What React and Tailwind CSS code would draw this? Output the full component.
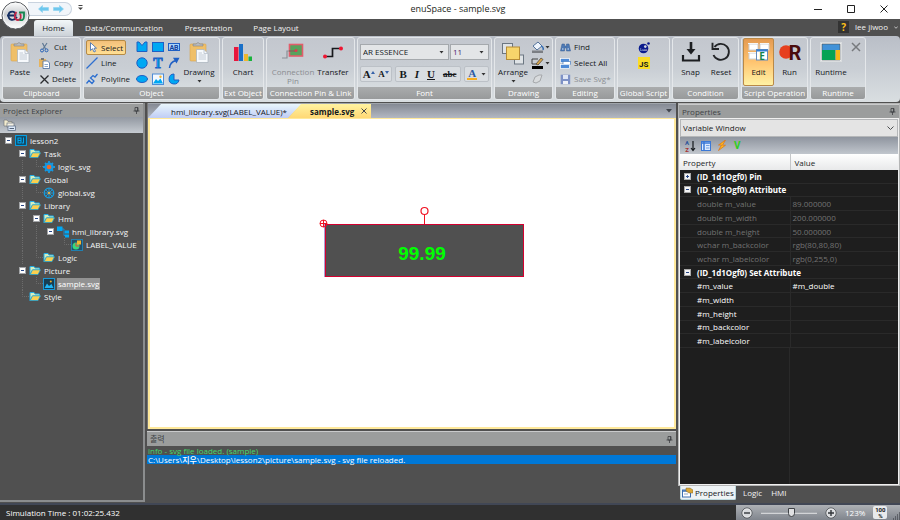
import React from "react";
import { clsx } from "clsx";

const BLUE = "#00a8f3";
const EDGE = "#1f5fc4";

function Svg({ w = 14, h = 14, box, children, className }) {
  return (
    <svg width={w} height={h} viewBox={box || `0 0 ${w} ${h}`} fill="none" aria-hidden="true" className={clsx("shrink-0", className)}>
      {children}
    </svg>
  );
}

function Group({ title, className, children, body }) {
  return (
    <section className={clsx("flex shrink-0 flex-col overflow-hidden rounded-[3px] border border-[#e4e7ea] bg-linear-to-b from-[#c3c7ce] via-[#c9ced4] to-[#dfe4e6]", className)}>
      <div className={clsx("flex flex-1", body)}>{children}</div>
      <h2 className="h-3 bg-linear-to-b from-[#aaacad] to-[#989a9b] text-center leading-[12px] font-medium whitespace-nowrap text-white">{title}</h2>
    </section>
  );
}

function Big({ icon, label, arrow, className, disabled }) {
  return (
    <button type="button" disabled={disabled} className={clsx("flex h-12 shrink-0 flex-col items-center rounded-[2px] pt-1 font-medium", disabled && "text-[#8a8d91]", className)}>
      <span className="flex h-[25px] items-start justify-center">{icon}</span>
      <span className="text-center leading-[9px] whitespace-pre">{label}</span>
      {arrow && <Caret className="mt-1" />}
    </button>
  );
}

function Small({ icon, label, className, disabled }) {
  return (
    <button type="button" disabled={disabled} className={clsx("flex h-4 items-center gap-1 font-medium whitespace-nowrap", disabled && "text-[#8a8d91]", className)}>
      {icon}
      {label}
    </button>
  );
}

function Caret({ className }) {
  return (
    <Svg w={5} h={3} className={className}>
      <path d="M0.5 0H4.5L2.5 2.6Z" fill="#333" />
    </Svg>
  );
}

function Clipboard() {
  return (
    <Svg w={20} h={21}>
      <rect x="1" y="2" width="16" height="17" rx="1" fill="#efbf68" stroke="#d9a64e" strokeWidth=".6" />
      <path d="M4 4V2H7Q9-1 11 2H14V4Z" fill="#b9bcc0" stroke="#777" strokeWidth=".5" />
      <path d="M7.500 7.500H15L19 11.500V20.500H7.500Z" fill="#f6f9fc" stroke="#a8b0ba" strokeWidth=".7" />
      <path d="M15 7.500V11.500H19M9.500 13H17M9.500 15H17M9.500 17H17M9.500 11H13" stroke="#b7c0cb" strokeWidth=".8" />
    </Svg>
  );
}

const ShapeIcons = [
  ["Polygon", <Svg w={12} h={12} key="a"><path d="M1 1H3L6 4.500L9 1H11V10.500H1Z" fill={BLUE} stroke={EDGE} /></Svg>],
  ["Rectangle", <Svg w={12} h={12} key="b"><rect x=".5" y="1.500" width="11" height="9" fill={BLUE} stroke={EDGE} /></Svg>],
  ["Label", <Svg w={12} h={12} key="c"><rect x=".5" y="2.500" width="11" height="7" fill="#a9d4fa" stroke={EDGE} /><text x="6" y="8.500" fontSize="7" fontWeight="700" fontFamily="Roboto, sans-serif" textAnchor="middle" fill="#123f9c">AB</text></Svg>],
  ["Circle", <Svg w={12} h={12} key="d"><circle cx="6" cy="6" r="5.200" fill={BLUE} stroke={EDGE} /></Svg>],
  ["Text", <Svg w={12} h={14} key="e"><text x="6" y="12" fontSize="14" fontWeight="700" fontFamily="Liberation Serif, serif" textAnchor="middle" fill={BLUE} stroke={EDGE} strokeWidth=".8">T</text></Svg>],
  ["Curve", <Svg w={12} h={12} key="f"><path d="M1.500 11Q2 5 8 3.500" stroke={EDGE} strokeWidth="1.500" /><path d="M5 .8H11.500L8.500 6.500Z" fill={EDGE} /></Svg>],
  ["Ellipse", <Svg w={12} h={12} key="g"><ellipse cx="6" cy="6" rx="5.500" ry="3.500" fill={BLUE} stroke={EDGE} /></Svg>],
  ["Image", <Svg w={12} h={12} key="h"><rect x=".5" y="1" width="11" height="10.500" fill="#f2f8ff" stroke="#4d8bd6" /><path d="M1 10.500L4 6L6 8L8.500 5.500L11 10.500Z" fill={BLUE} /><circle cx="8.500" cy="3.800" r="1.200" fill="#f4b52e" /></Svg>],
  ["Pie", <Svg w={12} h={12} key="i"><path d="M6 1A5 5 0 1 0 11 7H6Z" fill={BLUE} stroke={EDGE} /></Svg>],
];

function PickBox({ label, value, className, muted }) {
  return (
    <label className={clsx("relative flex h-4 items-center border border-[#a5a9ad] bg-[#e3e5e7]", className)}>
      <span className="sr-only">{label}</span>
      <select className={clsx("h-[14px] w-full appearance-none bg-transparent pl-[2px] leading-[14px] outline-none", muted)}>
        <option>{value}</option>
      </select>
      <Caret className="pointer-events-none absolute right-1" />
    </label>
  );
}

function Ribbon() {
  return (
    <div className="flex h-[66px] gap-[2px] rounded-sm bg-linear-to-b from-[#b9bec7] to-[#d9dee1] px-[2px] pt-[1px] pb-[2px] text-[#15181c]">
      <Group title="Clipboard" className="w-[79px]" body="pl-[3px]">
        <Big icon={<Clipboard />} label="Paste" className="w-7" />
        <div className="ml-[5px] pt-[1px]">
          <Small label="Cut" icon={<Svg w={11} h={11}><path d="M3.500 1L6.500 7M8 1L4 7" stroke="#5f7894" strokeWidth="1.200" /><circle cx="3" cy="8.500" r="1.500" stroke="#2761b5" /><circle cx="7.500" cy="8.300" r="1.500" stroke="#2761b5" /></Svg>} />
          <Small label="Copy" icon={<Svg w={11} h={11}><path d="M0 1H7V9H0Z" fill="#e5b460" /><path d="M2 0H5V2H2Z" fill="#777" /><path d="M4 3H8.500L10.500 5V10.500H4Z" fill="#fff" stroke="#496b9a" strokeWidth=".8" /><path d="M5.500 6.500H9M5.500 8.500H9" stroke="#5c82b5" strokeWidth=".7" /></Svg>} />
          <Small label="Delete" className="!gap-[2px]" icon={<Svg w={11} h={11}><path d="M1.500 1.500L9.500 9.500M9.500 1.500L1.500 9.500" stroke="#2a2c2f" strokeWidth="1.300" /></Svg>} />
        </div>
      </Group>

      <Group title="Object" className="w-[137px]" body="pl-[2px]">
        <div className="w-[46px] pt-[1px]">
          <button type="button" aria-pressed="true" className="mt-[1px] flex h-[15px] w-10 items-center gap-[3px] rounded-[2px] border border-[#b58a45] bg-linear-to-b from-[#f3c07a] to-[#ffdf94] pl-[2px] font-medium">
            <Svg w={9} h={11}><path d="M1.500 .7V8.500L3.500 6.700L5 10L6.500 9.300L5 6.200H7.500Z" fill="#fff" stroke="#3568b3" strokeWidth=".8" /></Svg>
            Select
          </button>
          <Small label="Line" className="!gap-[3px]" icon={<Svg w={12} h={12}><path d="M.5 11.500L11.500 .5" stroke="#2d6fd0" strokeWidth="1.300" /></Svg>} />
          <Small label="Polyline" className="!gap-[3px]" icon={<Svg w={12} h={12}><path d="M.5 10.500L3 7.500L6 10.500L8 8L4.500 5L7 2.500L9 4L11.500 1" stroke="#2d6fd0" strokeWidth="1.300" /></Svg>} />
        </div>
        <div className="mt-[1px] ml-[2px] grid h-12 w-12 grid-cols-3 place-items-center">
          {ShapeIcons.map(([name, icon]) => (
            <button type="button" key={name} aria-label={name}>{icon}</button>
          ))}
        </div>
        <Big icon={<Clipboard />} label="Drawing" arrow className="w-[34px]" />
      </Group>

      <Group title="Ext Object" className="w-[42px]" body="justify-center">
        <Big label="Chart" className="w-9" icon={<Svg w={20} h={20}><path d="M1 5H5.500V19H1Z" fill="#e8163c" /><path d="M6 2H10V19H6Z" fill="#1970c8" /><path d="M11 12H15V19H11Z" fill="#eeb72d" /><path d="M15.500 14.500H19V19H15.500Z" fill="#19b33b" /></Svg>} />
      </Group>

      <Group title="Connection Pin & Link" className="w-[89px]" body="pl-[2px]">
        <Big disabled label={"Connection\nPin"} className="w-[48px]" icon={<Svg w={24} h={20}><path d="M1 16H6V9H11" stroke="#8a9097" strokeWidth="1.200" /><rect x="8.500" y="2.500" width="13" height="11.500" fill="#58a25c" stroke="#e25d6b" strokeWidth="1.600" /><path d="M8 9H15" stroke="#7c6b5a" strokeWidth="1.300" /><circle cx="15" cy="8.500" r="1.500" fill="#e0394e" /></Svg>} />
        <Big label="Transfer" className="w-8" icon={<Svg w={20} h={20}><path d="M2 14.500H9.500V6.500H18" stroke="#17191c" strokeWidth="1.700" /><circle cx="2" cy="14.500" r="2" fill="#ef1632" /><circle cx="18" cy="6.500" r="2" fill="#ef1632" /></Svg>} />
      </Group>

      <Group title="Font" className="w-[135px]" body="flex-col px-[2px] pt-[6px]">
        <div className="flex gap-[1px]">
          <PickBox label="Font family" value="AR ESSENCE" className="w-[89px]" />
          <PickBox label="Font size" value="11" className="w-[39px]" muted="text-[#4a256b]" />
        </div>
        <div className="mt-[6px] flex h-4 gap-[3px] text-[11px] leading-[14px] [&>div]:flex [&>div]:items-center [&>div]:justify-around [&>div]:rounded-[2px] [&>div]:border [&>div]:border-[#bcc1c7] [&>div]:bg-[#d9dde1]">
          <div className="w-8 font-['Liberation_Serif',serif] font-bold">
            <button type="button" className="flex">A<Svg w={4} h={4} className="mt-1"><path d="M0 3L2 0L4 3Z" fill="#3763a9" /></Svg></button>
            <button type="button" className="flex text-[9px]">A<Svg w={4} h={4} className="mt-1"><path d="M0 0H4L2 3Z" fill="#3763a9" /></Svg></button>
          </div>
          <div className="w-[68px] font-['Liberation_Serif',serif] font-bold">
            <button type="button">B</button>
            <button type="button" className="italic">I</button>
            <button type="button" className="underline">U</button>
            <button type="button" className="text-[9px] line-through">abc</button>
          </div>
          <div className="w-[25px] font-['Liberation_Serif',serif] font-bold">
            <button type="button" aria-label="Font colour" className="flex items-center gap-1 leading-[10px] text-[#2c5aa4]">
              <span className="border-b-2 border-[#f5ad21] px-[1px]">A</span><Caret />
            </button>
          </div>
        </div>
      </Group>

      <Group title="Drawing" className="w-[59px]" body="pl-[2px]">
        <Big label="Arrange" arrow className="w-8" icon={<Svg w={24} h={24}><rect x="1.500" y="1.500" width="10" height="10" fill="#dfe3e6" stroke="#6c7782" /><rect x="13.500" y="13" width="9" height="9" fill="#dfe3e6" stroke="#6c7782" /><rect x="5.500" y="5" width="13" height="12.500" fill="#f7d56b" stroke="#b68c36" /></Svg>} />
        <div className="ml-[2px] pt-[1px]">
          <Small label={<Caret />} className="!gap-[1px]" icon={<Svg w={13} h={12}><path d="M2 5L7 1L11 5L6 9Z" fill="#eef4fc" stroke="#54739c" /><path d="M10 5Q13 6 12 9" stroke="#3970b5" strokeWidth="1.500" /><path d="M1 9.500H12V12H1Z" fill="#7b7e83" /></Svg>} />
          <Small label={<Caret />} className="!gap-[1px]" icon={<Svg w={13} h={12}><path d="M1 2H7M1 2V7H8" stroke="#333" strokeWidth=".9" /><path d="M5 7L10 1L12 2.500L7 8Z" fill="#d9a84d" stroke="#47413a" strokeWidth=".7" /><path d="M1 9H12V12H1Z" fill="#000" /></Svg>} />
          <Small disabled label="" icon={<Svg w={13} h={12}><path d="M4 4L8 2H11L9 8L5 10L2 9Z" fill="#d8dbdd" stroke="#a5a8ab" /></Svg>} />
        </div>
      </Group>

      <Group title="Editing" className="w-[60px]" body="flex-col pl-1 pt-[1px]">
        <Small label="Find" className="!gap-[3px]" icon={<Svg w={11} h={11}><path d="M2 2H4.500V4H6.500V2H9L10.500 9H6.500V6H4.500V9H.5Z" fill="#4d79b4" stroke="#345d94" strokeWidth=".5" /><path d="M2 7H3.500M7.500 7H9" stroke="#d5e5fa" /></Svg>} />
        <Small label="Select All" className="!gap-[3px]" icon={<Svg w={11} h={11}><rect x=".5" y=".5" width="9" height="4" fill="#4f8bd7" stroke="#fff" strokeWidth=".7" /><rect x="3" y="3.500" width="7.500" height="3" fill="#fff" stroke="#447bc0" strokeWidth=".7" /><rect x=".5" y="6.500" width="9" height="4" fill="#4f8bd7" stroke="#fff" strokeWidth=".7" /></Svg>} />
        <Small disabled label="Save Svg*" className="!gap-[3px]" icon={<Svg w={11} h={11}><rect x=".7" y=".7" width="9.500" height="9.500" fill="#7d91c6" /><path d="M3 1H8V5H3Z" fill="#dfe6f5" /><path d="M3 7H8V10H3Z" fill="#eef1f8" /></Svg>} />
      </Group>

      <Group title="Global Script" className="w-[53px]" body="flex-col items-center pt-[3px]">
        <button type="button" aria-label="Lua script" className="h-[14px]"><Svg w={12} h={12}><circle cx="5.500" cy="6.500" r="4.800" fill="#0a1a8c" /><circle cx="7.300" cy="4.600" r="1.300" fill="#d5dae5" /><circle cx="10.500" cy="1.500" r="1.300" fill="#0a1a8c" /><text x="5.500" y="9" fontSize="4" textAnchor="middle" fill="#fff">Lua</text></Svg></button>
        <button type="button" className="mt-[2px] h-3 w-3 bg-[#fbdc24] pt-[3px] pr-[1px] text-right font-['Roboto',sans-serif] leading-[9px] font-bold">JS</button>
      </Group>

      <Group title="Condition" className="w-[67px]" body="pl-[2px]">
        <Big label="Snap" className="w-[31px]" icon={<Svg w={20} h={20}><path d="M2 13V18.500H18V13" stroke="#1c1e21" strokeWidth="2.200" /><path d="M10 0V9" stroke="#1c1e21" strokeWidth="2.600" /><path d="M5.500 7H14.500L10 12.500Z" fill="#1c1e21" /></Svg>} />
        <Big label="Reset" className="w-[30px]" icon={<Svg w={20} h={20}><path d="M3.500 5A8 8 0 1 1 2.500 13" stroke="#222427" strokeWidth="1.900" /><path d="M1.500 .8V7H8" stroke="#222427" strokeWidth="1.900" /></Svg>} />
      </Group>

      <Group title="Script Operation" className="w-[67px]" body="pl-[1px]">
        <Big label="Edit" className="w-[31px] border border-[#b98948] bg-linear-to-b from-[#e49a51] via-[#ffc470] to-[#fff2a4] !pt-[3px]" icon={<Svg w={22} h={20}><rect x="1" y="2" width="9" height="6" fill="#fff" stroke="#cdd0d4" /><rect x="12" y="2" width="9" height="6" fill="#fff" stroke="#cdd0d4" /><rect x="1" y="11" width="9" height="6" fill="#fff" stroke="#cdd0d4" /><path d="M0 1.500H10M12 1.500H21M0 10.500H9" stroke="#f5f6f7" /><rect x="8.500" y="7.500" width="11" height="10.500" fill="#fff" stroke="#638aba" /><path d="M8.500 8.500H19.500" stroke="#347ed1" strokeWidth="2" /><text x="14" y="17.500" fontSize="10" fontWeight="700" textAnchor="middle" fill="#11844a">E</text></Svg>} />
        <Big label="Run" className="w-[31px]" icon={<Svg w={22} h={20}><circle cx="7" cy="10" r="6.800" fill="#e6401f" /><text x="16" y="17.500" fontSize="20" fontWeight="700" fontFamily="Roboto, sans-serif" textAnchor="middle" fill="#4a0c0d">R</text></Svg>} />
      </Group>

      <Group title="Runtime" className="w-[56px]" body="pl-[2px]">
        <Big label="Runtime" className="w-9" icon={<Svg w={22} h={20}><rect x=".5" y=".5" width="21" height="19" fill="#fff" stroke="#dadddf" /><rect x="2" y="2" width="18" height="16" fill="#4192d8" stroke="#4f565c" strokeWidth=".7" /><path d="M2 8H15V18H2Z" fill="#06a354" /><path d="M15.500 8H20V18H15.500Z" fill="#f8b818" /></Svg>} />
        <button type="button" aria-label="Stop runtime" className="mt-1 ml-[2px] self-start"><Svg w={10} h={10}><path d="M1 1L9 9M9 1L1 9" stroke="#777a7e" strokeWidth="1.500" /></Svg></button>
      </Group>
    </div>
  );
}

function Pin() {
  return (
    <Svg w={7} h={7}><path d="M2 .5H5V4H2ZM.5 4H6.500M3.500 4V7M4.500 .5V4" stroke="#3c3f42" strokeWidth=".8" /></Svg>
  );
}

function Pane({ title, children, className }) {
  return (
    <header className={clsx("flex shrink-0 items-center justify-between border-t border-[#c9cacb] bg-[#9b9d9d] px-[3px] text-[#404345]", className)}>
      <h2 className="leading-3">{title}</h2>
      {children}
      <button type="button" aria-label={`Pin ${title}`}><Pin /></button>
    </header>
  );
}

function Folder() {
  return (
    <Svg w={12} h={11}><path d="M1 1.500H5L6 3H10.500V5H3.500L1 9.500Z" fill="#d5efc0" stroke="#24aee6" /><path d="M3.500 4.800H11.500L9 9.500H1.200Z" fill="#fbd04f" stroke="#27a4cf" strokeWidth=".8" /></Svg>
  );
}

const treeIcons = {
  root: <Svg w={12} h={11}><rect x=".6" y=".6" width="10.800" height="9.800" fill="#16455c" stroke={BLUE} /><path d="M3 3H6V8H3ZM3 5.500H6M8.500 2.500V8H7" stroke={BLUE} strokeWidth="1.100" /></Svg>,
  folder: <Folder />,
  gear: <Svg w={12} h={12}><circle cx="6" cy="6" r="3.300" stroke="#1597e0" strokeWidth="2.500" /><path d="M6 0V12M0 6H12M2 2L10 10M10 2L2 10" stroke="#1597e0" strokeWidth="1.800" /><circle cx="6" cy="6" r="2.300" fill="#f06a2a" /></Svg>,
  globe: <Svg w={12} h={12}><circle cx="6" cy="6" r="4.800" stroke="#149de2" strokeWidth="1.200" /><path d="M6 1V11M1 6H11M2.500 2.500L9.500 9.500M9.500 2.500L2.500 9.500" stroke="#149de2" strokeWidth=".9" /><circle cx="6" cy="6" r="1.300" fill="#e0b04a" /></Svg>,
  nodes: <Svg w={12} h={12}><path d="M3 3H7V9.500H9M7 6H9" stroke="#158cd1" /><path d="M0 .5H5.500V5H0ZM8 4.500H12V7.500H8ZM8 8.500H12V11.500H8Z" fill={BLUE} /></Svg>,
  label: <Svg w={12} h={12}><rect x=".5" y=".5" width="11" height="11" fill="#255069" stroke="#2180b0" /><circle cx="5" cy="7" r="3.500" fill="#37d67c" /><path d="M6 1.500H10V5.500H6Z" fill="#f7b52c" /><path d="M5 4V7H8" stroke="#ea4938" /></Svg>,
  image: <Svg w={12} h={12}><rect x=".5" y=".5" width="11" height="11" fill="#173e53" stroke="#1a96d5" /><path d="M1.500 10L4 5.500L6 8L8.500 6L10.500 10Z" fill="#20b5f4" /><circle cx="7.800" cy="3.500" r="1" fill="#f3b02b" /></Svg>,
};

// Each guide letter fills one indent column: v = line, l = last branch, m = open node, o = blank.
const tree = [
  ["m", "root", "lesson2"],
  ["om", "folder", "Task"],
  ["ovl", "gear", "logic_svg"],
  ["om", "folder", "Global"],
  ["ovl", "globe", "global.svg"],
  ["om", "folder", "Library"],
  ["ovm", "folder", "Hmi"],
  ["ovvm", "nodes", "hmi_library.svg"],
  ["ovvol", "label", "LABEL_VALUE"],
  ["ovl", "folder", "Logic"],
  ["om", "folder", "Picture"],
  ["ovl", "image", "sample.svg"],
  ["ol", "folder", "Style"],
];

function Guide({ kind }) {
  if (kind === "m")
    return (
      <button type="button" aria-label="Collapse" className="flex w-[14px] shrink-0 items-center justify-center">
        <Svg w={7} h={7}><rect x=".5" y=".5" width="6" height="6" fill="#fff" stroke="#a3a5a8" /><path d="M2 3.500H5" stroke="#264687" /></Svg>
      </button>
    );
  return (
    <Svg w={14} h={13}>
      {kind === "v" && <path d="M7.500 0V13" stroke="#6c6c6c" strokeDasharray="1 1" />}
      {kind === "l" && <path d="M7.500 0V6.500H14" stroke="#6c6c6c" strokeDasharray="1 1" />}
    </Svg>
  );
}

function Explorer() {
  return (
    <aside className="flex flex-col border-r-2 border-[#8b8d8e] border-b-2">
      <Pane title="Project Explorer" className="h-[14px]" />
      <div className="flex h-4 items-center bg-linear-to-b from-[#9298a1] to-[#c6cbd1] pl-[3px]">
        <button type="button" aria-label="Project files"><Svg w={13} h={12}><path d="M1 1H4L5 2.500H9V7H1Z" fill="#f4edcf" stroke="#77797c" strokeWidth=".7" /><rect x="4" y="4" width="7" height="4" fill="#f5f2e5" stroke="#6c7481" strokeWidth=".7" /><rect x="5" y="7" width="7.500" height="4.500" fill="#dbe7f7" stroke="#55657c" strokeWidth=".7" /><path d="M6.500 9.500H11" stroke="#55657c" /></Svg></button>
      </div>
      <ul className="pt-[1px] pl-[1px] text-[#f4f6f7]">
        {tree.map(([guides, icon, name]) => (
          <li key={name} className="flex h-[13px] items-center">
            {guides.split("").map((g, i) => <Guide key={i} kind={g} />)}
            {treeIcons[icon]}
            <span className={clsx("ml-[2px] px-[1px] leading-3 whitespace-nowrap", name === "sample.svg" && "bg-[#929292] text-white")}>{name}</span>
          </li>
        ))}
      </ul>
    </aside>
  );
}

function Editor() {
  return (
    <div className="flex min-w-0 flex-col">
      <div className="flex min-h-[325px] flex-1 flex-col border-l border-[#777]">
        <div role="tablist" className="flex h-[15px] items-end border-t border-[#a0a5ab] bg-linear-to-b from-[#858a94] to-[#b3b8c2] text-[#14171c]">
          <button type="button" role="tab" aria-selected="false" className="h-[14px] w-[154px] bg-linear-to-b from-[#e9f6fc] to-[#c0cdf5] pl-2 text-center leading-[13px] [clip-path:polygon(13px_0,100%_0,91%_100%,0_100%)]">hmi_library.svg(LABEL_VALUE)*</button>
          <div className="-ml-[14px] flex h-[14px] w-[83px] items-center bg-linear-to-b from-[#fff3a0] to-[#ffd875] pl-[22px] [clip-path:polygon(13px_0,100%_0,100%_100%,0_100%)]">
            <button type="button" role="tab" aria-selected="true" className="leading-[13px] font-bold">sample.svg</button>
            <button type="button" aria-label="Close tab" className="mr-1 ml-auto"><Svg w={6} h={6}><path d="M.5 .5L5.500 5.500M5.500 .5L.5 5.500" stroke="#44484d" /></Svg></button>
          </div>
          <button type="button" aria-label="Open documents" className="mr-1 ml-auto self-center"><Svg w={6} h={4}><path d="M0 0H6L3 3.500Z" fill="#40454d" /></Svg></button>
        </div>
        <div className="flex-1 border-2 border-t-[1px] border-[#ffe99b] bg-white">
          <svg width="100%" height="307" aria-label="sample.svg drawing">
            <rect x="175.500" y="105.500" width="198" height="52" fill="#505050" stroke="#d4002f" />
            <path d="M174.500 105V158" stroke="#a9a0d0" />
            <text x="272" y="141" fontSize="19" fontWeight="700" fontFamily="Liberation Sans, Arial, sans-serif" textAnchor="middle" fill="#00ff00">99.99</text>
            <g stroke="#f01222" fill="none">
              <path d="M274.500 96V105" />
              <circle cx="274.500" cy="92" r="3.500" fill="#fff" strokeWidth="1.200" />
              <circle cx="173.500" cy="104.500" r="3.500" />
              <path d="M170 104.500H177M173.500 101V108" />
            </g>
          </svg>
        </div>
      </div>
      <section className="mt-[2px] h-[71px] shrink-0">
        <Pane title="출력" className="h-[15px]" />
        <div className="leading-[9px] font-medium">
          <p className="px-[1px] text-[#45d96d]">info - svg file loaded. (sample)</p>
          <p className="h-[9px] bg-[#0078d7] px-[1px] text-white">C:\Users\지우\Desktop\lesson2\picture\sample.svg - svg file reloaded.</p>
        </div>
      </section>
    </div>
  );
}

const ID = "(ID_1d1Ogf0)";
const rows = [
  ["closed", `${ID} Pin`, ""],
  ["open", `${ID} Attribute`, ""],
  ["dim", "double m_value", "89.000000"],
  ["dim", "double m_width", "200.000000"],
  ["dim", "double m_height", "50.000000"],
  ["dim", "wchar m_backcolor", "rgb(80,80,80)"],
  ["dim", "wchar m_labelcolor", "rgb(0,255,0)"],
  ["open", `${ID} Set Attribute`, ""],
  ["set", "#m_value", "#m_double"],
  ["set", "#m_width", ""],
  ["set", "#m_height", ""],
  ["set", "#m_backcolor", ""],
  ["set", "#m_labelcolor", ""],
];

function Properties() {
  return (
    <aside className="flex flex-col">
      <div className="flex flex-1 flex-col border border-[#b5b6b6]">
        <Pane title="Properties" className="h-[14px]" />
        <div className="flex flex-1 flex-col border border-[#f0f0f0] bg-[#1e1e1e]">
          <label className="relative flex h-[18px] items-center border border-[#b5b7b9] bg-[#e4e4e4]">
            <span className="sr-only">Window</span>
            <select className="h-4 w-full appearance-none bg-transparent pl-[2px] leading-4 text-[#17191b] outline-none"><option>Variable Window</option></select>
            <Svg w={7} h={5} className="pointer-events-none absolute right-[3px]"><path d="M.5 .5L3.500 3.500L6.500 .5" stroke="#4c4e50" /></Svg>
          </label>
          <div className="flex h-[17px] items-center gap-[5px] bg-linear-to-b from-[#8f959f] to-[#c1c6cd] pl-1">
            <button type="button" aria-label="Sort"><Svg w={12} h={14}><text x="3" y="6" fontSize="6" fontWeight="700" fontFamily="Roboto, sans-serif" textAnchor="middle" fill="#2d549b">A</text><text x="3" y="13" fontSize="6" fontWeight="700" fontFamily="Roboto, sans-serif" textAnchor="middle" fill="#a53333">Z</text><path d="M9 2V11M7 9L9 11.500L11 9" stroke="#15181c" strokeWidth="1.200" /></Svg></button>
            <button type="button" aria-label="Categories"><Svg w={10} h={10}><rect x=".5" y=".5" width="9" height="9" fill="#dbe9ff" stroke="#3b78d6" /><path d="M1 2H9M3 1V9" stroke="#3b78d6" strokeWidth="1.500" /><path d="M5 4.500H8.500M5 7H8.500" stroke="#719fe0" /></Svg></button>
            <button type="button" aria-label="Events" className="ml-[1px]"><Svg w={10} h={11}><path d="M8.500 0L1.500 5H4.500L1.500 10.500L8.500 5.200H5.500Z" fill="#ffb91d" stroke="#dd7014" strokeWidth=".7" /></Svg></button>
            <button type="button" className="ml-[2px] font-['Roboto',sans-serif] text-[10px] font-bold text-[#2ece20]">V</button>
          </div>
          <table className="h-[194px] w-full table-fixed border-collapse text-left leading-[11px]">
            <colgroup><col /><col className="w-[108px]" /></colgroup>
            <thead className="h-4 bg-linear-to-b from-white to-[#e8e9ea] text-[#222426]">
              <tr>
                <th className="p-0 pl-[3px] font-medium">Property</th>
                <th className="border-l border-[#c5c7c9] p-0 pl-1 font-medium">Value</th>
              </tr>
            </thead>
            <tbody>
              {rows.map(([kind, name, value]) => {
                const heading = kind === "open" || kind === "closed";
                return (
                  <tr key={name} className={clsx("border-b border-[#2a2a2a]", kind === "dim" ? "text-[#737373]" : "text-white")}>
                    <td colSpan={heading ? 2 : 1} className={clsx("p-0 whitespace-nowrap", heading ? "pl-1 font-bold" : "pl-[17px]", kind === "set" && "font-medium")}>
                      {heading ? (
                        <span className="flex items-center gap-[6px]">
                          <button type="button" aria-label={kind === "open" ? "Collapse" : "Expand"}>
                            <Svg w={7} h={7}><rect x=".5" y=".5" width="6" height="6" fill="#f4f4f4" stroke="#aaa" /><path d={kind === "open" ? "M2 3.500H5" : "M2 3.500H5M3.500 2V5"} stroke="#264687" /></Svg>
                          </button>
                          {name}
                        </span>
                      ) : name}
                    </td>
                    {!heading && <td className={clsx("border-l border-[#2a2a2a] p-0 pl-[2px]", kind === "set" && "font-medium")}>{value}</td>}
                  </tr>
                );
              })}
            </tbody>
          </table>
          <div className="mr-[108px] flex-1 border-r border-[#292929]" />
        </div>
      </div>
      <div role="tablist" className="flex h-4 shrink-0 items-start pl-[2px] font-medium text-[#f1f2f3]">
        <button type="button" role="tab" aria-selected="true" className="flex h-[14px] w-[56px] items-center gap-[2px] rounded-b-[2px] border border-t-0 border-[#bcd8dd] bg-[#eef3f5] pl-[1px] text-[#15181b]">
          <Svg w={11} h={11}><rect x=".5" y="3" width="8" height="7" fill="#fff" stroke="#3a6eb0" /><path d="M1 4H8" stroke="#3a6eb0" strokeWidth="1.500" /><path d="M4 1H8L11 3V6H7L4 4Z" fill="#dba837" stroke="#7a6534" strokeWidth=".5" /><path d="M2 7H6" stroke="#8fa8c6" /></Svg>
          Properties
        </button>
        <button type="button" role="tab" aria-selected="false" className="h-[14px] px-[7px]">Logic</button>
        <button type="button" role="tab" aria-selected="false" className="h-[14px] px-[2px]">HMI</button>
      </div>
    </aside>
  );
}

function Round({ plus }) {
  return (
    <Svg w={12} h={12}><circle cx="6" cy="6" r="5" fill="#d7d9dc" stroke="#34373b" strokeWidth=".8" /><circle cx="6" cy="6" r="4.200" stroke="#fff" strokeWidth=".6" /><path d={plus ? "M3 6H9M6 3V9" : "M3 6H9"} stroke="#33363a" strokeWidth="1.400" /></Svg>
  );
}

function TitleBar() {
  return (
    <div className="flex h-[19px] items-start bg-white text-[9px] text-[#1d1f21]">
      <div className="flex flex-1 pt-[2px] pl-7">
        <div className="flex h-[14px] w-[44px] items-center gap-1 rounded-r-full border border-l-0 border-[#c9d3df] bg-[#f1f5fa] pl-[10px]">
          <button type="button" aria-label="Undo"><Svg w={11} h={8}><path d="M.5 4L4.500 .5V2.500H10.500V5.500H4.500V7.500Z" fill="#6cc7ee" stroke="#8bd0ef" strokeWidth=".6" /></Svg></button>
          <button type="button" aria-label="Redo"><Svg w={11} h={8}><path d="M10.500 4L6.500 .5V2.500H.5V5.500H6.500V7.500Z" fill="#6cc7ee" stroke="#8bd0ef" strokeWidth=".6" /></Svg></button>
        </div>
        <button type="button" aria-label="Customize toolbar" className="ml-[6px] flex h-3 items-center"><Svg w={5} h={6}><path d="M.5 .5H4.500" stroke="#444" /><path d="M0 2.500H5L2.500 5Z" fill="#444" /></Svg></button>
      </div>
      <h1 className="leading-[18px]">enuSpace - sample.svg</h1>
      <div className="flex h-[18px] flex-1 items-center justify-end gap-[25px] pr-3">
        <button type="button" aria-label="Minimize"><Svg w={8} h={8}><path d="M0 4.500H8" stroke="#222" /></Svg></button>
        <button type="button" aria-label="Maximize"><Svg w={8} h={8}><path d="M.5 .5H7.500V7.500H.5Z" stroke="#222" /></Svg></button>
        <button type="button" aria-label="Close"><Svg w={8} h={8}><path d="M.5 .5L7.500 7.500M7.500 .5L.5 7.500" stroke="#222" /></Svg></button>
      </div>
    </div>
  );
}

export default function App() {
  return (
    <div className="relative flex min-h-screen min-w-[900px] flex-col overflow-hidden bg-[#505050] font-['Open_Sans','Noto_Sans_CJK_KR',sans-serif] text-[8px]">
      <TitleBar />
      <button type="button" aria-label="Application menu" className="absolute top-[1px] left-[1px]">
        <Svg w={29} h={29}>
          <defs><linearGradient id="orb" x1="0" y1="0" x2="0" y2="1"><stop stopColor="#fff" /><stop offset=".45" stopColor="#c9cccf" /><stop offset=".55" stopColor="#d6d8da" /><stop offset="1" stopColor="#fff" /></linearGradient></defs>
          <circle cx="14.500" cy="14.500" r="13.500" fill="url(#orb)" stroke="#595c60" />
          <circle cx="14.500" cy="14.500" r="12.300" stroke="#f8f9fa" />
          <path d="M6 14.500H14.500C15 9.500 8 9.500 7.500 14C7 19.500 13 20.500 16 16" stroke="#173063" strokeWidth="1.800" />
          <path d="M15.500 11C12.500 14 13.500 19 17 19C20 19 20.500 15 19 12.500" stroke="#c22646" strokeWidth="1.800" />
          <path d="M18 11.500H23V15.500C23 19 20.500 20 18.500 18.500" stroke="#168750" strokeWidth="1.800" />
        </Svg>
      </button>
      <nav className="flex h-[17px] items-end pl-[34px] font-medium text-[#f2f2f2]">
        <button type="button" className="h-4 w-[39px] rounded-t-[3px] bg-linear-to-b from-[#f2f7f8] to-[#ccd2d8] text-[#17191b]">Home</button>
        <button type="button" className="h-4 w-[102px]">Data/Communcation</button>
        <button type="button" className="h-4 w-[67px]">Presentation</button>
        <button type="button" className="h-4 w-[68px]">Page Layout</button>
        <div className="ml-auto flex h-[18px] items-center gap-[6px] pr-[2px]">
          <button type="button" aria-label="Help" className="h-3 w-[11px] bg-[#333] text-[10px] leading-3 font-bold text-[#ffc21a]">?</button>
          <button type="button" className="flex items-center gap-[6px]">lee jiwoo<Svg w={4} h={3}><path d="M.3 .5L2 2.300L3.700 .5" stroke="#ddd" strokeWidth=".8" /></Svg></button>
        </div>
      </nav>
      <Ribbon />
      <main className="mt-[1px] grid flex-1 grid-cols-[145px_minmax(0,1fr)_222px] gap-[2px] pb-[1px]">
        <Explorer />
        <Editor />
        <Properties />
      </main>
      <footer className="flex h-[17px] shrink-0 items-center justify-between border-t-2 border-[#414755] bg-[#303030] text-white">
        <output className="pl-[6px] font-medium">Simulation Time : 01:02:25.432</output>
        <div className="flex h-full w-[164px] items-center bg-linear-to-b from-[#aeb1b5] to-[#80858d] pl-[5px]">
          <button type="button" aria-label="Zoom out"><Round /></button>
          <input type="range" min="10" max="230" defaultValue="130" aria-label="Zoom" className="mx-2 h-3 w-[56px] appearance-none bg-linear-to-b from-transparent from-45% via-white via-50% to-transparent to-60% [&::-webkit-slider-thumb]:h-[9px] [&::-webkit-slider-thumb]:w-[7px] [&::-webkit-slider-thumb]:appearance-none [&::-webkit-slider-thumb]:rounded-b-full [&::-webkit-slider-thumb]:border [&::-webkit-slider-thumb]:border-[#3f4246] [&::-webkit-slider-thumb]:bg-[#dfe0e2]" />
          <button type="button" aria-label="Zoom in"><Round plus /></button>
          <span className="ml-2">123%</span>
          <button type="button" className="ml-2 h-[13px] w-[14px] rounded-[2px] bg-[#e8eaec] text-center font-['Roboto',sans-serif] text-[6px] leading-[6px] font-bold text-[#17191b]">100 %</button>
          <Svg w={8} h={8} className="mt-auto ml-auto"><path d="M7 1H8M5 3H8M3 5H8M1 7H8" stroke="#303238" strokeDasharray="1 1" /></Svg>
        </div>
      </footer>
    </div>
  );
}
